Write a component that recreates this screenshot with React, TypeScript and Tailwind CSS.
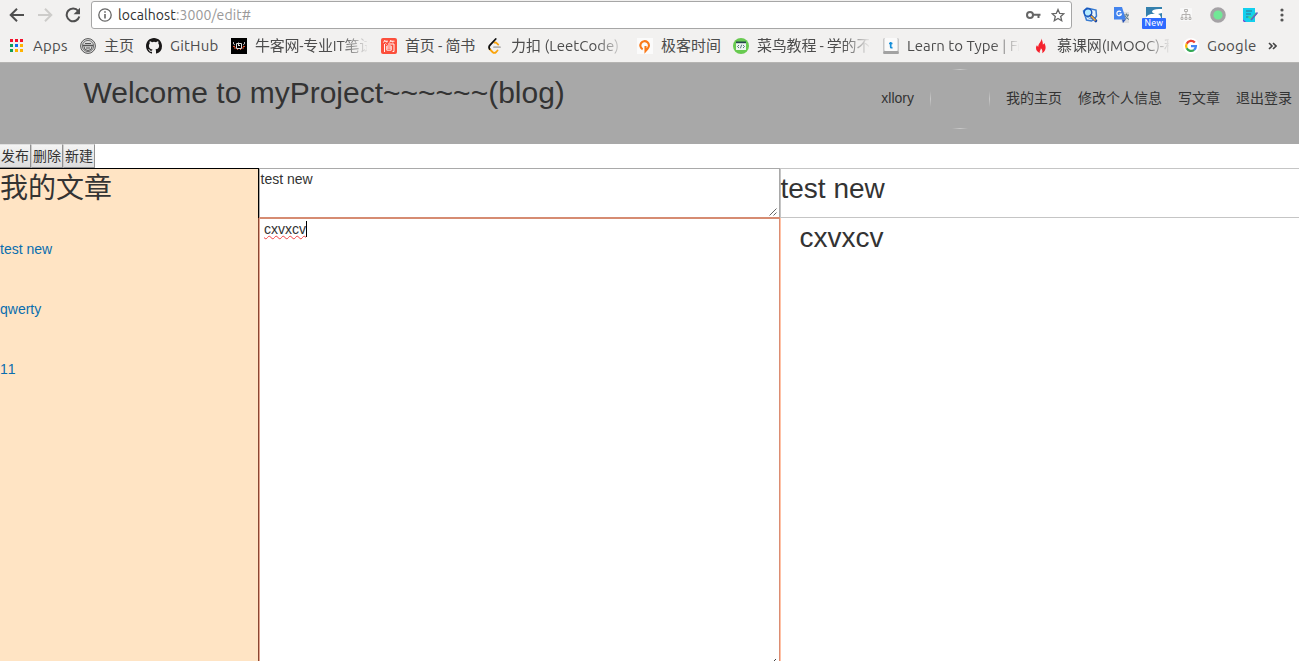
import type { ReactNode } from 'react';

const chromeFont = "font-['Ubuntu','Noto_Sans','Noto_Sans_CJK_SC',sans-serif]";
const pageFont = "font-['Liberation_Sans','Noto_Sans_CJK_SC',sans-serif]";
const fade = '[mask-image:linear-gradient(to_right,#000_76%,transparent_102%)]';

function AppsIcon() {
  const colors = ['#f2102c', '#f2102c', '#f2102c', '#109d58', '#0f6df0', '#ffb300', '#109d58', '#ffb300', '#ffb300'];
  return (
    <svg width="16" height="16" viewBox="0 0 16 16" shapeRendering="crispEdges">
      {colors.map((c, i) => (
        <rect key={i} x={(i % 3) * 5} y={1 + Math.floor(i / 3) * 5} width="3" height="3" fill={c} />
      ))}
    </svg>
  );
}

function HomeIcon() {
  return (
    <svg width="16" height="16" viewBox="0 0 16 16" fill="none" stroke="#555">
      <circle cx="8" cy="8" r="7.4" fill="#ddd" />
      <circle cx="8" cy="8" r="5.6" strokeWidth=".8" />
      <path d="M3 7.500h10" strokeWidth="1.500" />
      <path d="M4 8.500q0 4 4 4t4-4M5 5.500h6M6 10h4" strokeWidth="1" />
    </svg>
  );
}

function GithubIcon() {
  return (
    <svg width="16" height="16" viewBox="0 0 16 16" fill="#191717">
      <path d="M8 0C3.58 0 0 3.58 0 8c0 3.54 2.29 6.53 5.47 7.59.4.07.55-.17.55-.38v-1.49c-2.23.48-2.7-.94-2.7-.94-.36-.92-.89-1.17-.89-1.17-.73-.5.05-.49.05-.49.81.06 1.23.83 1.23.83.71 1.23 1.87.87 2.33.66.07-.52.28-.87.51-1.07-1.78-.2-3.64-.89-3.64-3.95 0-.87.31-1.59.82-2.15-.08-.2-.36-1.02.08-2.12 0 0 .67-.21 2.2.82a7.6 7.6 0 0 1 4 0c1.53-1.04 2.2-.82 2.2-.82.44 1.1.16 1.92.08 2.12.51.56.82 1.27.82 2.15 0 3.07-1.87 3.75-3.65 3.95.29.25.54.73.54 1.48v2.19c0 .21.15.46.55.38A8.01 8.01 0 0 0 16 8c0-4.42-3.58-8-8-8Z" />
    </svg>
  );
}

function NowcoderIcon() {
  return (
    <svg width="16" height="16" viewBox="0 0 16 16">
      <path fill="#000" d="M0 0h16v16H0z" />
      <path d="M5.500 5.500h5v5h-5zM7.500 4.500v3M7 7.500h2" fill="none" stroke="#ddd" />
      <path d="M2.500 4v2l1.500 1M13.500 4v2L12 7" fill="none" stroke="#ccc" strokeWidth=".9" />
      <path d="M2 8.500h2M3 10h2M12 8.500h2M11 10h2M6 11.500h1M9 11.500h1" stroke="#f0532d" />
    </svg>
  );
}

function JianshuIcon() {
  return (
    <svg width="16" height="16" viewBox="0 0 16 16">
      <rect width="16" height="16" rx="2" fill="#fc4f3c" />
      <path d="M4 2 2.500 4.500M3.800 3.200H7M5 3.200l.8 1.300M10 2 8.700 4.500M9.500 3.200h4M11 3.200l.8 1.300M3.500 6v8M4.500 5.500l1 1M7 6h6v7.500h-1.500M5.800 8h4.400v4.200H5.800zM5.800 10h4.400" fill="none" stroke="#fff" strokeWidth=".95" />
    </svg>
  );
}

function LeetIcon() {
  return (
    <svg width="16" height="16" viewBox="0 0 16 16" fill="none" strokeLinecap="round" strokeWidth="1.8">
      <path d="M2.600 11 5.500 14q1.900 1.800 3.700 0l1.300-1.500M7.500 4.600q1.200-.4 2.200.6l1.500 1.400" stroke="#f9a40d" />
      <path d="M8.700 1 3 7.200Q1.300 9 2.600 11" stroke="#111" />
      <path d="M7 9.200h6" stroke="#b3b3b3" />
    </svg>
  );
}

function GeekIcon() {
  return (
    <svg width="16" height="16" viewBox="0 0 16 16">
      <path fill="#fbfbfb" d="M0 0h16v16H0z" />
      <path d="M5.700 11.300A4.300 4.300 0 1 1 10.700 10.500L8.500 13V8" fill="none" stroke="#fa7919" strokeWidth="2.100" />
    </svg>
  );
}

function RunoobIcon() {
  return (
    <svg width="16" height="16" viewBox="0 0 16 16">
      <circle cx="8" cy="8" r="8" fill="#68ca50" />
      <path fill="#edf5ef" d="M3 4h10v8H3z" />
      <path fill="#23444d" d="M3 3.500h10v1.700H3z" />
      <path d="M6 7 4.500 8.500 6 10M10 7l1.500 1.500L10 10M8.700 6.700l-1.300 3.600" fill="none" stroke="#315660" strokeWidth=".8" />
    </svg>
  );
}

function TypeIcon() {
  return (
    <svg width="16" height="16" viewBox="0 0 16 16">
      <rect width="16" height="16" rx="1.5" fill="#c8c8c8" />
      <path fill="#a2a2a2" d="M1 13h14l1 2-1 1H1l-1-1z" />
      <rect x="1.500" y="0" width="13" height="13" rx="1" fill="#fafafa" />
      <path d="M7.700 4v5q0 1 1.800.7M6 5.500h3.500" fill="none" stroke="#168fda" strokeWidth="1.700" />
    </svg>
  );
}

function FlameIcon() {
  return (
    <svg width="16" height="16" viewBox="0 0 16 16" fill="#f5222d">
      <path d="M8.500.5c.8 2.500 1.500 4 1.300 6 .8-.2 1.200-.7 1.600-1.500 1.500 3 1.600 5.400.6 7.300-.6 1.200-1.500 2.200-2.900 2.900.7-2 .2-3.600-1.200-5-.1 2-1.500 2.500-1.200 4.700C4.500 14 3 12.400 3 10c0-1.300.4-2 1-2.800.3.800.7 1.200 1.300 1.500C5.200 5.500 8.500 4 8.500.5Z" />
    </svg>
  );
}

function GoogleIcon() {
  return (
    <svg width="16" height="16" viewBox="0 0 16 16">
      <circle cx="8" cy="8" r="8" fill="#fff" />
      <g fill="none" strokeWidth="2.3">
        <path d="M11.8 4.400A4.900 4.900 0 0 0 3.700 5.700" stroke="#ea4335" />
        <path d="M3.700 5.700a4.900 4.900 0 0 0 0 4.600" stroke="#fbbc05" />
        <path d="M3.700 10.300a4.900 4.900 0 0 0 7.400 1.500" stroke="#34a853" />
        <path d="M11.100 11.800A4.900 4.900 0 0 0 12.900 8.200H8" stroke="#4285f4" />
      </g>
    </svg>
  );
}

type Bookmark = { icon: ReactNode; label: string; item: string; text?: string };

const bookmarks: Bookmark[] = [
  { icon: <AppsIcon />, label: 'Apps', item: 'w-[70px]', text: 'ml-[-1px] tracking-[0.2px]' },
  { icon: <HomeIcon />, label: '主页', item: 'w-[66px]' },
  { icon: <GithubIcon />, label: 'GitHub', item: 'w-[85px]', text: 'tracking-[0.2px]' },
  { icon: <NowcoderIcon />, label: '牛客网-专业IT笔试', item: 'w-[150px]', text: `w-[112px] tracking-[-0.25px] ${fade}` },
  { icon: <JianshuIcon />, label: '首页 - 简书', item: 'w-[106px]', text: 'tracking-[-0.15px]' },
  { icon: <LeetIcon />, label: '力扣 (LeetCode)', item: 'w-[150px]', text: `w-[112px] ${fade}` },
  { icon: <GeekIcon />, label: '极客时间', item: 'w-[96px]' },
  { icon: <RunoobIcon />, label: '菜鸟教程 - 学的不', item: 'w-[150px]', text: `w-[112px] tracking-[-0.2px] ${fade}` },
  { icon: <TypeIcon />, label: 'Learn to Type | Fr', item: 'w-[150px]', text: `w-[112px] ${fade}` },
  { icon: <FlameIcon />, label: '慕课网(IMOOC)-程', item: 'w-[150px]', text: `w-[112px] tracking-[-0.1px] ${fade}` },
  { icon: <GoogleIcon />, label: 'Google', item: 'w-[84px]', text: 'tracking-[0.2px]' },
];

function Extensions() {
  return (
    <div className="ml-[10px] flex h-[30px] items-center">
      <svg className="mr-[15px]" width="16" height="16" viewBox="0 0 16 16" fill="none">
        <path d="M1.500 4 5 1l9 2 .5 6-2 3-3 2-5-1z" fill="#e9f3fa" stroke="#387bd0" strokeWidth="1.500" />
        <path d="m3 9 6 3 4-1" stroke="#5a9bdc" />
        <circle cx="6" cy="5.500" r="3.800" fill="#b4ebff" stroke="#1753bc" strokeWidth="1.400" />
        <path d="m8.800 8.800 5 5" stroke="#1646a5" strokeWidth="3" strokeLinecap="round" />
        <path d="m9 9 4.500 4.500" stroke="#f5aa33" strokeWidth="1.700" />
      </svg>
      <svg className="mr-3" width="17" height="17" viewBox="0 0 17 17">
        <path fill="#dedede" d="M6 5h10v11H9z" />
        <path fill="#4384ee" d="M1 0h8l4 12.500H1z" />
        <path fill="#2954b8" d="M9 12.500h4L10 16z" />
        <path d="M8 5A2.300 2.300 0 1 0 8.400 7H6.300" fill="none" stroke="#fff" strokeWidth="1.200" />
        <path d="M11 8h5M13.500 6.500V8M15 8q-1 3-3 4.500M12 9q1 2 4 3.500" fill="none" stroke="#607d8b" />
      </svg>
      <div className="mr-3.5 flex h-[22px] w-6 translate-y-[3px] flex-col items-center">
        <svg className="shrink-0" width="16" height="11" viewBox="0 0 16 11">
          <path fill="#fff" d="M0 0h16v11H0z" />
          <path fill="#3480ad" d="M0 0h16v2h-3Q6.500 2 6 4.500q0 1.500 3 2.500H5Q2 7.500 0 10z" />
          <path d="M12 7q2.500.5 3 4H16V6z" fill="#3480ad" />
        </svg>
        <span className="flex h-[11px] w-6 shrink-0 items-center justify-center rounded-[1px] bg-[#2f6bff] font-['Roboto'] text-[9px] leading-none tracking-[0.3px] text-white">New</span>
      </div>
      <svg className="mr-[18px]" width="12" height="14" viewBox="0 0 12 14">
        <rect width="12" height="13" rx="1" fill="#f8f8f8" />
        <path d="M4.500 1.500h3v2h-3zM6 4v5M2 9V6.500h8V9M1 9.500h2v2H1zM5 9.500h2v2H5zM9 9.500h2v2H9z" fill="none" stroke="#b5b3b1" />
      </svg>
      <svg className="mr-[17px]" width="16" height="16" viewBox="0 0 16 16">
        <circle cx="8" cy="8" r="6.200" fill="#71e796" stroke="#a5a2a5" strokeWidth="3.200" />
      </svg>
      <svg className="mr-[21px]" width="16" height="16" viewBox="0 0 16 16" fill="none">
        <path d="M0 1h12v14H2L0 13z" fill="#12d0ee" />
        <path d="M0 12.500 3 15H1L0 14z" fill="#7a3ed2" />
        <path d="M3 4h6M3 7h5M3 10h3" stroke="#35718d" strokeWidth="1.200" />
        <path d="m5.500 9.500 3 2.500 5-6" stroke="#35dd8f" strokeWidth="2" />
        <path d="m8 13 6.500-7.500" stroke="#645bc9" strokeWidth="1.500" />
      </svg>
      <svg width="4" height="16" viewBox="0 0 4 16" fill="#555">
        <circle cx="2" cy="3" r="1.600" /><circle cx="2" cy="8" r="1.600" /><circle cx="2" cy="13" r="1.600" />
      </svg>
    </div>
  );
}

function BrowserChrome() {
  return (
    <div className={`h-[63px] border-b border-[#b5b4b2] bg-[#f2f1f0] ${chromeFont}`}>
      <div className="flex h-[30px] items-center">
        <div className="flex w-[91px] items-center gap-3 pl-[9px]">
          <svg width="16" height="16" viewBox="0 0 16 16" fill="none" stroke="#4f4f4f" strokeWidth="2"><path d="M15 8H2.500M8 1.700 1.700 8 8 14.300" /></svg>
          <svg width="16" height="16" viewBox="0 0 16 16" fill="none" stroke="#cdccca" strokeWidth="2"><path d="M1 8h12.500M8 1.700 14.300 8 8 14.300" /></svg>
          <svg width="16" height="16" viewBox="0 0 16 16" fill="none" stroke="#4f4f4f" strokeWidth="2"><path d="M13.200 4A6.400 6.400 0 1 0 14.300 9.500" /><path d="M15 .8v6.400H8.600z" fill="#4f4f4f" stroke="none" /></svg>
        </div>
        <div className="flex h-7 w-[981px] items-center rounded-[3px] border border-[#a6a6a6] bg-white px-[6px]">
          <svg width="14" height="14" viewBox="0 0 14 14" fill="none" stroke="#666" strokeWidth="1.300"><circle cx="7" cy="7" r="6.200" /><path d="M7 6v4.500M7 3.200v1.500" strokeWidth="1.600" /></svg>
          <span className="ml-[6px] flex-1 text-[14px] leading-5 tracking-[0.1px] text-[#999]"><span className="text-[#303030]">localhost</span>:3000/edit#</span>
          <svg className="mr-[10px]" width="15" height="10" viewBox="0 0 15 10" fill="none" stroke="#666" strokeWidth="2"><circle cx="4" cy="5" r="3" /><path d="M7 4.700h7.500M12.500 5v3" /></svg>
          <svg width="14" height="14" viewBox="0 0 14 14" fill="none" stroke="#666" strokeWidth="1.300"><path d="m7 1.500 1.700 3.900 4.200.3-3.200 2.800 1 4.200L7 10.500l-3.700 2.200 1-4.200-3.200-2.800 4.200-.3z" /></svg>
        </div>
        <Extensions />
      </div>
      <div className="flex h-8 items-center pl-[10px] text-[#4c4c4c]">
        {bookmarks.map((b) => (
          <div key={b.label} className={`flex shrink-0 items-center gap-2 ${b.item}`}>
            <span className="shrink-0">{b.icon}</span>
            <span className={`shrink-0 overflow-hidden text-[15px] leading-6 whitespace-nowrap ${b.text ?? ''}`}>{b.label}</span>
          </div>
        ))}
        <svg className="ml-px" width="9" height="8" viewBox="0 0 9 8" fill="none" stroke="#444" strokeWidth="1.600"><path d="m1 1 3 3-3 3M5 1l3 3-3 3" /></svg>
      </div>
    </div>
  );
}

function EmptyAvatar() {
  return (
    <svg className="mt-[2px]" width="60" height="60" viewBox="0 0 60 60">
      <defs>
        <linearGradient id="edge-x"><stop stopColor="#c8c8c8" stopOpacity="0" /><stop offset=".5" stopColor="#c8c8c8" /><stop offset="1" stopColor="#c8c8c8" stopOpacity="0" /></linearGradient>
        <linearGradient id="edge-y" x2="0" y2="1"><stop stopColor="#c8c8c8" stopOpacity="0" /><stop offset=".5" stopColor="#c8c8c8" /><stop offset="1" stopColor="#c8c8c8" stopOpacity="0" /></linearGradient>
      </defs>
      <path d="M22 0h16v1H22zM22 59h16v1H22z" fill="url(#edge-x)" />
      <path d="M0 22h1v16H0zM59 22h1v16h-1z" fill="url(#edge-y)" />
    </svg>
  );
}

function SiteHeader() {
  return (
    <header className="flex h-[81px] justify-between bg-[#a8a8a8] pr-[7px] pl-[83.500px]">
      <h1 className="mt-[10px] text-[30px] leading-10">Welcome to myProject~~~~~~(blog)</h1>
      <nav className="mt-[5px] flex h-[60px] items-center gap-4 text-[14px] leading-5">
        <span>xllory</span>
        <EmptyAvatar />
        <span>我的主页</span>
        <span>修改个人信息</span>
        <span>写文章</span>
        <span>退出登录</span>
      </nav>
    </header>
  );
}

function ResizeHandle() {
  return (
    <svg className="mr-[2px] mb-px self-end" width="8" height="8" viewBox="0 0 8 8" stroke="#555" fill="none"><path d="M.5 7.500 7.500.5M4.500 7.500l3-3" strokeWidth=".9" /></svg>
  );
}

export default function App() {
  return (
    <div className={`flex h-[661px] w-[1299px] flex-col overflow-hidden bg-white text-[#333] ${pageFont}`}>
      <BrowserChrome />
      <SiteHeader />
      <div className="flex h-6 text-[14px] leading-[22px]">
        {['发布', '删除', '新建'].map((label) => (
          <button key={label} className="flex h-6 w-8 justify-center border border-t-[#e0e0e0] border-r-[#929292] border-b-[#929292] border-l-[#ccc] bg-linear-to-b from-[#f4f4f4] to-[#dddddd] whitespace-nowrap first:w-[31px] first:border-l-0">{label}</button>
        ))}
      </div>
      <main className="flex h-[493px]">
        <aside className="flex w-[259px] border-t border-black bg-[#ffe4c4]">
          <div className="flex-1">
            <h2 className="h-[70px] text-[28px] leading-[39px]">我的文章</h2>
            <div className="flex flex-col gap-10 text-[14px] leading-5 text-[#0a6eaf]">
              <a href="#">test new</a>
              <a href="#">qwerty</a>
              <a href="#" className="tracking-[1px]">11</a>
            </div>
          </div>
          <div className="flex w-px flex-col">
            <div className="h-[49px] bg-black" />
            <div className="flex-1 bg-[#8a4632]" />
          </div>
        </aside>
        <section className="flex w-[521px] flex-col text-[14px] leading-5">
          <div className="flex h-[49px] justify-between border-t border-r border-l border-[#a9a9a9]">
            <span className="pl-[0.5px]">test new</span>
            <ResizeHandle />
          </div>
          <div className="flex h-[444px] border-t-2 border-r border-l border-t-[#d68c72] border-r-[#dc8d72] border-l-[#e3a58f] pl-1">
            <div className="flex h-[20px] flex-1 items-start">
              <span className="mt-0.5 flex h-4 items-center border-r border-black">
                <span className="underline decoration-[#f24343] decoration-wavy decoration-[1px] underline-offset-[1px]">cxvxcv</span>
              </span>
            </div>
            <svg className="mr-[2px] self-end" width="3" height="2" viewBox="0 0 3 2"><path d="M0 2 2 0" stroke="#444" /></svg>
          </div>
        </section>
        <section className="flex flex-1 flex-col">
          <div className="h-[50px] border-y border-l border-[#c5c5c5] text-[28px] leading-[40px]"><span className="-ml-[0.5px]">test new</span></div>
          <div className="flex-1 border-l border-[#ffc1a6] pl-[18.5px] text-[28px] leading-10">cxvxcv</div>
        </section>
      </main>
    </div>
  );
}
